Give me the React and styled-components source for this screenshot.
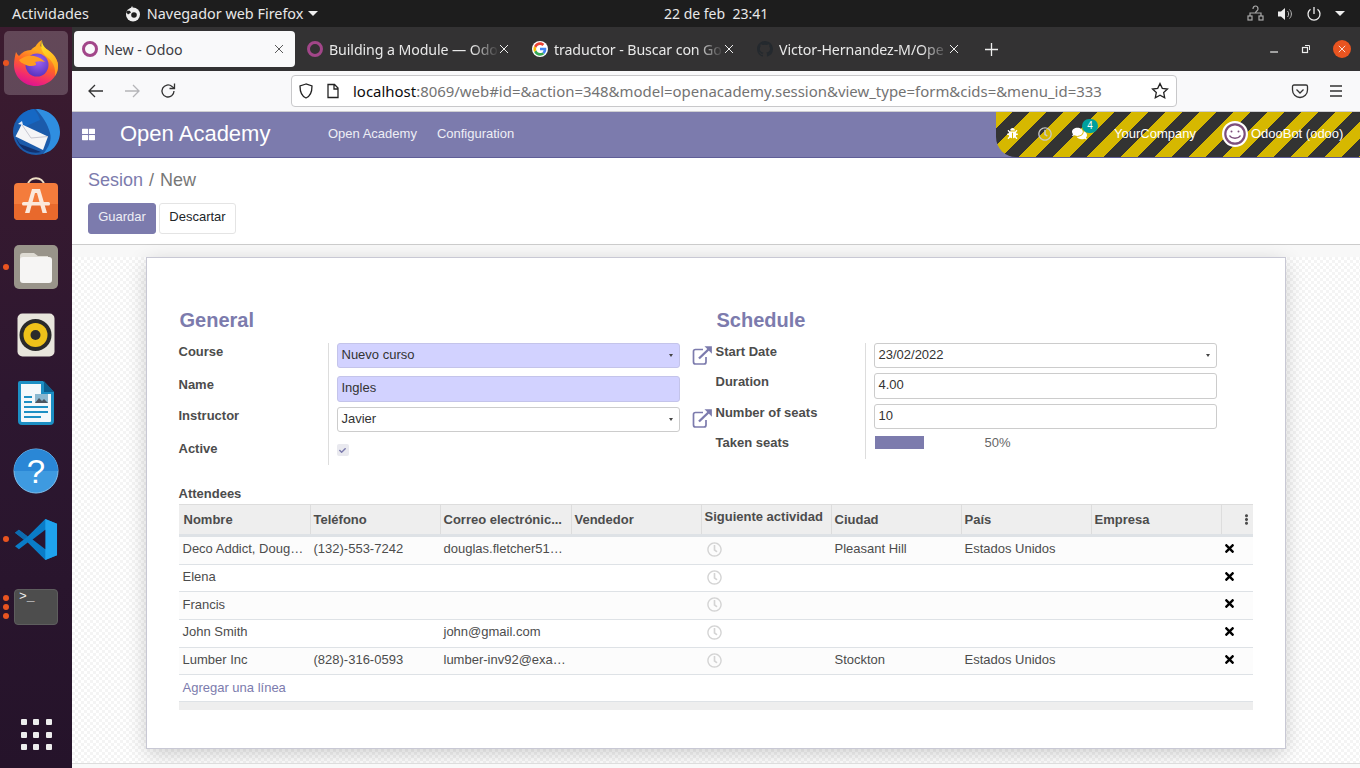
import React from 'react';
import styled, { createGlobalStyle } from 'styled-components';
import {
  FaBug,
  FaCheck,
  FaComments,
  FaEllipsisV,
  FaRegClock,
  FaThLarge,
  FaTimes,
} from 'react-icons/fa';

const ARIAL = '"Liberation Sans", Arial, sans-serif';
const UBUNTU = '"Noto Sans", "Open Sans", sans-serif';
const PURPLE = '#7c7bad';
const COLUMNS = '131px 130px 131px 130px 130px 130px 130px 130px 32px';

const GlobalStyle = createGlobalStyle`
  html, body { margin: 0; padding: 0; height: 100%; overflow: hidden; }
  * { box-sizing: border-box; }
`;

const Screen = styled.div`
  width: 1360px;
  height: 768px;
  display: flex;
  flex-direction: column;
  overflow: hidden;
  font-family: ${ARIAL};
`;

/* ---- gnome top bar ---- */
const TopBar = styled.div`
  height: 27px;
  flex: none;
  background: #1d1d1d;
  color: #e8e8e8;
  font-family: ${UBUNTU};
  font-size: 14.4px;
  display: grid;
  grid-template-columns: 652px auto 1fr;
  align-items: center;
  padding: 0 15px 0 12px;
`;
const TopLeft = styled.div`
  display: flex;
  align-items: center;
`;
const AppMenu = styled.div`
  display: flex;
  align-items: center;
  gap: 5px;
  margin-left: 36px;
  svg {
    margin-right: 1px;
  }
`;
const TopClock = styled.div`
  font-size: 14px;
  white-space: pre;
`;
const TopRight = styled.div`
  display: flex;
  align-items: center;
  justify-content: flex-end;
  gap: 13px;
`;
const Caret = styled.span`
  width: 0;
  height: 0;
  border-left: 5px solid transparent;
  border-right: 5px solid transparent;
  border-top: 5px solid #eee;
`;

const Body = styled.div`
  flex: 1;
  display: flex;
  min-height: 0;
`;

/* ---- dock ---- */
const Dock = styled.div`
  width: 72px;
  flex: none;
  background: linear-gradient(180deg, #3c1b2f 0%, #2d1730 50%, #25132a 100%);
  display: flex;
  flex-direction: column;
  align-items: center;
  padding: 4px 0 0;
  gap: 4px;
`;
const DockItem = styled.div`
  position: relative;
  width: 64px;
  height: 64px;
  flex: none;
  border-radius: 5px;
  display: flex;
  align-items: center;
  justify-content: center;
  background: ${p => (p.$active ? 'rgba(255,255,255,0.2)' : 'transparent')};
`;
const DockDots = styled.div`
  position: absolute;
  left: -1px;
  top: 0;
  bottom: 0;
  display: flex;
  flex-direction: column;
  justify-content: center;
  gap: 3px;
`;
const DockDot = styled.span`
  width: 6px;
  height: 6px;
  border-radius: 50%;
  background: #e95420;
`;
const AppGrid = styled.div`
  margin-top: auto;
  margin-bottom: 18px;
  display: grid;
  grid-template-columns: repeat(3, 6px);
  gap: 6.5px;
`;
const AppGridDot = styled.span`
  width: 6px;
  height: 6px;
  border-radius: 1px;
  background: #eee;
`;

/* ---- firefox window ---- */
const Browser = styled.div`
  flex: 1;
  min-width: 0;
  display: flex;
  flex-direction: column;
`;
const TabBar = styled.div`
  height: 44px;
  flex: none;
  background: #333233;
  display: flex;
  align-items: center;
  padding: 0 0 0 2px;
  font-family: ${UBUNTU};
  font-size: 14.2px;
`;
const Tab = styled.div`
  width: ${p => (p.$active ? '221px' : '225px')};
  margin-right: ${p => (p.$active ? '4px' : '0')};
  height: 36px;
  border-radius: 4px;
  background: ${p => (p.$active ? '#f9f9fa' : 'transparent')};
  color: ${p => (p.$active ? '#3d3d44' : '#e8e8e8')};
  display: flex;
  align-items: center;
  padding: 0 ${p => (p.$active ? '11px' : '15px')} 0 8px;
  gap: 6px;
`;
const TabTitle = styled.span`
  flex: 1;
  min-width: 0;
  white-space: nowrap;
  overflow: hidden;
  margin-right: ${p => (p.$active ? '0' : '-6px')};
  letter-spacing: ${p => (p.$active ? '0' : '-0.1px')};
  -webkit-mask-image: ${p =>
    p.$active ? 'none' : 'linear-gradient(90deg, #000 84%, transparent 100%)'};
`;
const OdooFavicon = styled.span`
  width: 16px;
  height: 16px;
  flex: none;
  border-radius: 50%;
  border: 3.5px solid #a24689;
`;
const NewTab = styled.div`
  margin-left: 11px;
  display: flex;
  align-items: center;
`;
const WindowButtons = styled.div`
  margin-left: auto;
  display: flex;
  align-items: center;
  gap: 22px;
  padding-right: 9px;
`;
const CloseCircle = styled.span`
  width: 18px;
  height: 18px;
  border-radius: 50%;
  background: #e95420;
  display: flex;
  align-items: center;
  justify-content: center;
`;

const Toolbar = styled.div`
  height: 41px;
  flex: none;
  background: #f9f9fa;
  border-bottom: 1px solid #cfcfd2;
  display: flex;
  align-items: center;
  padding: 0 15px 0 15px;
`;
const NavButtons = styled.div`
  display: flex;
  align-items: center;
  gap: 18px;
  width: 204px;
`;
const UrlBar = styled.div`
  width: 886px;
  height: 32px;
  background: #fff;
  border: 1px solid #c8c8ca;
  border-radius: 4px;
  display: flex;
  align-items: center;
  padding: 0 7px 0 6px;
  gap: 12px;
  font-family: ${UBUNTU};
  font-size: 14.95px;
  color: #737373;
`;
const UrlText = styled.div`
  flex: 1;
  white-space: nowrap;
  overflow: hidden;
  margin-left: 1px;
  b {
    font-weight: 400;
    color: #0c0c0d;
  }
`;
const ToolbarRight = styled.div`
  margin-left: auto;
  display: flex;
  align-items: center;
  gap: 18px;
`;

/* ---- odoo ---- */
const OdooNav = styled.div`
  height: 46px;
  flex: none;
  background: ${PURPLE};
  border-bottom: 1px solid #5f5e97;
  color: #fff;
  display: flex;
  align-items: stretch;
`;
const AppsToggle = styled.div`
  width: 48px;
  padding-left: 10px;
  display: flex;
  align-items: center;
  font-size: 13px;
`;
const Brand = styled.div`
  font-size: 22px;
  line-height: 44px;
  width: 208px;
`;
const NavMenu = styled.div`
  display: flex;
  align-items: center;
  gap: 20px;
  font-size: 13px;
  padding-bottom: 2px;
  color: #eeeef5;
`;
const SystrayHatch = styled.div`
  margin-left: auto;
  width: 364px;
  border-bottom-left-radius: 20px;
  background: repeating-linear-gradient(
    135deg,
    #d6b800 0,
    #d6b800 12px,
    #333 12px,
    #333 24px
  );
  display: flex;
  align-items: center;
  font-size: 13px;
  padding: 0 0 2px 11px;
  color: #fff;
`;
const TrayIcon = styled.span`
  position: relative;
  display: flex;
  align-items: center;
  margin-right: ${p => p.$gap}px;
  color: ${p => p.$color || '#fff'};
`;
const Badge = styled.span`
  position: absolute;
  left: 10px;
  top: -7px;
  width: 16px;
  height: 14px;
  border-radius: 8px;
  background: #00a09d;
  color: #fff;
  font-size: 10px;
  text-align: center;
  line-height: 13px;
`;
const Avatar = styled.span`
  width: 26px;
  height: 26px;
  border-radius: 50%;
  background: #fff;
  border: 2px solid #fff;
  margin: 0 3px 0 26px;
  display: flex;
`;

const ControlPanel = styled.div`
  height: 87px;
  flex: none;
  background: #fff;
  border-bottom: 1px solid #ccc;
  padding: 10px 16px 0;
`;
const Breadcrumb = styled.div`
  font-size: 18px;
  line-height: 24px;
  color: #777;
  a {
    color: ${PURPLE};
  }
  i {
    font-style: normal;
    margin: 0 6px;
  }
`;
const Buttons = styled.div`
  display: flex;
  gap: 3px;
  margin-top: 11px;
`;
const Button = styled.button`
  width: ${p => (p.$primary ? '68px' : '77px')};
  height: 31px;
  font-family: ${ARIAL};
  font-size: 13px;
  padding: 0 0 5px;
  border-radius: 3px;
  border: 1px solid ${p => (p.$primary ? PURPLE : '#e4e4e4')};
  background: ${p => (p.$primary ? PURPLE : '#fff')};
  color: ${p => (p.$primary ? '#eeeef5' : '#212529')};
`;

const Content = styled.div`
  flex: 1;
  min-height: 0;
  display: flex;
  flex-direction: column;
  align-items: center;
  padding-top: 12px;
  background:
    linear-gradient(#f8f8f8, #f8f8f8) 0 0 / 100% 12px no-repeat,
    repeating-conic-gradient(#f4f4f4 0 25%, #fff 0 50%) 0 0 / 6px 6px;
`;
const Sheet = styled.div`
  width: 1140px;
  height: 492px;
  flex: none;
  margin-right: 1px;
  background: #fff;
  border: 1px solid #c8c8d4;
  box-shadow: 0 5px 20px -1px rgba(0, 0, 0, 0.2);
  padding: 47px 32px 0;
`;
const Footer = styled.div`
  margin-top: auto;
  width: 100%;
  height: 5px;
  flex: none;
  background: #f9f9f9;
  border-top: 1px solid #ddd;
`;

const Groups = styled.div`
  display: grid;
  grid-template-columns: 537px 1fr;
`;
const GroupTitle = styled.div`
  font-size: 20px;
  font-weight: 700;
  line-height: 24px;
  color: ${PURPLE};
  margin: 3px 0 11px 1px;
`;
const Fields = styled.div`
  display: grid;
  grid-template-columns: 149px 1fr;
`;
const FieldLabel = styled.label`
  height: ${p => p.$height}px;
  padding-top: 1px;
  font-size: 13px;
  font-weight: 700;
  line-height: 16px;
  color: #4c4c4c;
`;
const FieldValue = styled.div`
  height: ${p => p.$height}px;
  border-left: 1px solid #ddd;
  padding-left: 8px;
  position: relative;
`;
const Input = styled.div`
  width: 343px;
  height: ${p => p.$height || 25}px;
  border: 1px solid ${p => (p.$required ? '#c4c4ea' : '#ccc')};
  border-radius: 3px;
  background: ${p => (p.$required ? '#d2d2ff' : '#fff')};
  font-size: 13px;
  line-height: 21px;
  padding: 0 4px;
  color: #333;
  position: relative;
`;
const SelectCaret = styled.span`
  position: absolute;
  right: 6px;
  top: 10px;
  border-left: 2.5px solid transparent;
  border-right: 2.5px solid transparent;
  border-top: 3px solid #444;
`;
const ExternalLink = styled.span`
  position: absolute;
  left: 363px;
  top: ${p => p.$top}px;
  display: flex;
`;
const Checkbox = styled.span`
  margin-top: 4px;
  width: 12px;
  height: 12px;
  border-radius: 2px;
  background: #e9e9ef;
  color: ${PURPLE};
  font-size: 7px;
  display: flex;
  align-items: center;
  justify-content: center;
`;
const Progress = styled.div`
  display: flex;
  align-items: center;
  font-size: 13px;
  color: #666;
  padding: 1px 0 0 1px;
`;
const ProgressTrack = styled.div`
  width: 99px;
  height: 13px;
  margin-right: 11px;
`;
const ProgressFill = styled.div`
  height: 100%;
  background: ${PURPLE};
`;

const AttendeesLabel = styled.div`
  font-size: 13px;
  font-weight: 700;
  color: #4c4c4c;
  line-height: 16px;
  margin-top: 21px;
  margin-bottom: 2px;
`;
const Table = styled.div`
  width: 1074px;
  font-size: 13px;
  color: #4c4c4c;
`;
const HeadRow = styled.div`
  display: grid;
  grid-template-columns: ${COLUMNS};
  height: 33px;
  background: #eee;
  border-top: 1px solid #ddd;
  border-bottom: 3px solid #dee2e6;
`;
const HeadCell = styled.div`
  font-weight: 700;
  line-height: 16px;
  padding: ${p => (p.$high ? '4px' : '7px')} 0 0 ${p => (p.$first ? '5px' : '3px')};
  border-left: ${p => (p.$first ? '0' : '1px solid #ddd')};
  white-space: nowrap;
  overflow: hidden;
`;
const Row = styled.div`
  display: grid;
  grid-template-columns: ${COLUMNS};
  height: 27.7px;
  background: ${p => (p.$odd ? '#fcfcfc' : '#fff')};
  border-bottom: 1px solid #dee2e6;
`;
const Cell = styled.div`
  line-height: 16px;
  padding: 4.3px 4px 0;
  white-space: nowrap;
  min-width: 0;
`;
const ActivityCell = styled.div`
  padding: 5px 0 0 6px;
  color: #d4d4d4;
  font-size: 15px;
  display: flex;
  align-items: flex-start;
`;
const DeleteCell = styled.div`
  padding: 5px 0 0 2px;
  color: #000;
  font-size: 13px;
  display: flex;
  align-items: flex-start;
`;
const AddLine = styled.div`
  height: 27px;
  border-bottom: 1px solid #dee2e6;
  color: ${PURPLE};
  line-height: 16px;
  padding: 5px 4px 0;
`;
const TableFoot = styled.div`
  height: 8px;
  background: #eee;
`;

/* ---- small drawings ---- */
const OpenIcon = () => (
  <svg width="21" height="20" viewBox="0 0 21 20" fill="none" stroke={PURPLE} strokeWidth="1.7">
    <path d="M11 4.500H3.500a2 2 0 0 0-2 2V17a2 2 0 0 0 2 2H12a2 2 0 0 0 2-2v-5" />
    <path d="M7 13.500 18.500 2.500" strokeWidth="2.400" />
    <path d="M12.500 1.300h7.400v7.400z" fill={PURPLE} stroke="none" />
  </svg>
);

const FirefoxLogo = () => (
  <svg width="46" height="48" viewBox="0 0 46 48">
    <defs>
      <linearGradient id="ffBody" x1="0.75" y1="0.1" x2="0.4" y2="1">
        <stop offset="0" stopColor="#ffb81f" />
        <stop offset="0.45" stopColor="#ff6228" />
        <stop offset="0.78" stopColor="#f22c6e" />
        <stop offset="1" stopColor="#dc1490" />
      </linearGradient>
      <linearGradient id="ffFlame" x1="0.4" y1="0" x2="0.6" y2="1">
        <stop offset="0" stopColor="#ffe226" />
        <stop offset="1" stopColor="#ff9a1e" />
      </linearGradient>
      <radialGradient id="ffCore" cx="0.55" cy="0.35" r="0.75">
        <stop offset="0" stopColor="#9f63f3" />
        <stop offset="1" stopColor="#4f2db8" />
      </radialGradient>
    </defs>
    <path d="M3 13c1 2 2 3 3 4 3-4 7-6 12-6 3-4 8-5 11-3 8 3 16 10 16 19 0 11-10 20-22 20S1 38 1 26c0-5 1-9 2-13z" fill="url(#ffBody)" />
    <path d="M29 1c0 5 3 8 7 11 6 5 9 10 9 15 0 4-1 7-3 10 1-8-2-15-8-19-5-4-7-10-5-17z" fill="url(#ffFlame)" />
    <path d="M29 1c-2 4-2 8 0 12l-8-2c1-4 4-8 8-10z" fill="#ffa81f" />
    <circle cx="24" cy="26" r="11.500" fill="url(#ffCore)" />
    <path d="M6 21c5-4 10-5 15-4 5 1 8 3 11 6-4-1-7-1-10 0 1 1 1 2 1 3-4 2-9 1-12-1-2-1-4-2-5-4z" fill="#ff9c20" />
  </svg>
);

const ThunderbirdLogo = () => (
  <svg width="48" height="48" viewBox="0 0 48 48">
    <circle cx="24" cy="25" r="23" fill="#1b5bab" />
    <path d="M24 2c12 0 24 9 24 23 0 8-4 15-10 19l-7 3c6-7 9-14 7-21-2-9-8-17-14-24z" fill="#2f8ee0" />
    <path d="M5 14C8 7 14 3 22 2c3 4 5 7 6 11L12 20z" fill="#1668c4" />
    <path d="M3.500 29.500 9.700 17.300 36 29.500 31 43z" fill="#f5f5f7" />
    <path d="M9.700 17.300 19 31l17-1.500" fill="none" stroke="#c8c8d2" strokeWidth="1" />
    <path d="M4 31c2 6 6 11 11 13 5 2 10 2 14 1L8 37z" fill="#12306d" />
    <path d="M6 17l4-3 1 4z" fill="#e8eef8" />
  </svg>
);

const SoftwareLogo = () => (
  <svg width="46" height="44" viewBox="0 0 46 44">
    <path d="M15 8c0-9 16-9 16 0" fill="none" stroke="#eedfc5" strokeWidth="1.800" />
    <rect x="1" y="6" width="44" height="37" rx="4" fill="#f47c3c" />
    <path d="M1 27h44v12a4 4 0 0 1-4 4H5a4 4 0 0 1-4-4z" fill="#e8692c" />
    <path d="M19 12h8l7 24h-4.500l-5.500-20h-2l-5.500 20H12z" fill="#fbe9dc" />
    <rect x="9" y="25" width="28" height="3.500" rx="1.500" fill="#fbe9dc" />
  </svg>
);

const FilesLogo = () => (
  <svg width="46" height="46" viewBox="0 0 46 46">
    <rect x="1" y="1" width="44" height="44" rx="5" fill="#99948a" />
    <path d="M7 12a3 3 0 0 1 3-3h11l4 3h10v4H7z" fill="#dedbd3" />
    <rect x="7" y="13" width="32" height="26" rx="3" fill="#f6f5f4" />
  </svg>
);

const RhythmboxLogo = () => (
  <svg width="38" height="44" viewBox="0 0 38 44">
    <rect x="0.500" y="0.500" width="37" height="43" rx="5" fill="#e8e5dc" />
    <circle cx="18.500" cy="22" r="16" fill="#2a2a2a" />
    <circle cx="18.500" cy="22" r="12" fill="#eec21a" />
    <circle cx="18.500" cy="22" r="5" fill="#2b2b2b" />
  </svg>
);

const WriterLogo = () => (
  <svg width="38" height="46" viewBox="0 0 38 46">
    <path d="M3 1h23l11 11v29a4 4 0 0 1-4 4H5a4 4 0 0 1-4-4V3a2 2 0 0 1 2-2z" fill="#1c8fc4" />
    <path d="M4 4h20v10h10v27a1 1 0 0 1-1 1H5a1 1 0 0 1-1-1z" fill="#f3f8fb" />
    <path d="M27 1l10 11H27z" fill="#0e5f8f" />
    <path d="M7 16h8v2H7zM7 21h8v2H7zM7 26h24v2H7zM7 31h24v2H7zM7 36h17v2H7z" fill="#1c8fc4" />
    <rect x="18" y="14" width="13" height="9" fill="#8bb8d0" />
    <path d="M18 23l4-5 3 3 2-2 4 4z" fill="#4b5560" />
  </svg>
);

const HelpLogo = () => (
  <svg width="46" height="46" viewBox="0 0 46 46">
    <circle cx="23" cy="23" r="22" fill="#3e9ae0" stroke="#7fc0ee" strokeWidth="1" />
    <path d="M1 23a22 22 0 0 1 44 0z" fill="#2a87d6" />
    <text x="23" y="35" textAnchor="middle" fontFamily={ARIAL} fontSize="33" fill="#fff">?</text>
  </svg>
);

const VsCodeLogo = () => (
  <svg width="43" height="43" viewBox="0 0 44 44">
    <path d="M31 1 13 19 4 12 0 15l9 7-9 7 4 3 9-7 18 18 12-5V6z" fill="#0a7cc8" />
    <path d="M31 1l12 5v32l-12 5z" fill="#1fa3ee" />
    <path d="M31 12v20L18 22z" fill="#2a1530" />
    <path d="M13 19 4 12 0 15l9 7z" fill="#0d6bb0" />
  </svg>
);

const Terminal = styled.div`
  width: 44px;
  height: 36px;
  border-radius: 4px;
  background: #4d4d4d;
  border: 1px solid #5e5e5e;
  color: #eee;
  font-family: "Liberation Mono", monospace;
  font-size: 13px;
  line-height: 12px;
  padding: 1px 4px;
`;

const Smile = () => (
  <svg width="22" height="22" viewBox="0 0 22 22">
    <circle cx="11" cy="11" r="9.700" fill="#fff" stroke="#7c4f7c" strokeWidth="2.200" />
    <circle cx="7.500" cy="8.500" r="1" fill="#7c4f7c" />
    <circle cx="14.500" cy="8.500" r="1" fill="#7c4f7c" />
    <path d="M5.500 12.500c2 3.500 9 3.500 11 0" fill="none" stroke="#7c4f7c" strokeWidth="1.500" />
  </svg>
);

const GoogleIcon = () => (
  <svg width="16" height="16" viewBox="0 0 48 48" style={{ flex: 'none' }}>
    <circle cx="24" cy="24" r="24" fill="#fff" />
    <path d="M43 24.500c0-1.400-.1-2.700-.4-4H24v7.600h10.800c-.5 2.500-1.900 4.600-4 6l6.200 4.800c3.600-3.300 6-8.300 6-14.400z" fill="#4285f4" />
    <path d="M24 44c5.400 0 9.900-1.800 13-4.900l-6.200-4.800c-1.700 1.200-4 1.900-6.800 1.900-5.200 0-9.600-3.500-11.200-8.200l-6.400 5C9.700 39.500 16.300 44 24 44z" fill="#34a853" />
    <path d="M12.800 28c-.8-2.500-.8-5.500 0-8l-6.400-5c-2.800 5.500-2.800 12.500 0 18z" fill="#fbbc05" />
    <path d="M24 11.800c2.900 0 5.400 1 7.400 2.900l5.500-5.500C33.600 6 29.200 4 24 4 16.300 4 9.700 8.500 6.400 15l6.400 5c1.600-4.700 6-8.200 11.200-8.200z" fill="#ea4335" />
  </svg>
);

const GithubIcon = () => (
  <svg width="16" height="16" viewBox="0 0 16 16" fill="#24292e" style={{ flex: 'none' }}>
    <path d="M8 0C3.600 0 0 3.600 0 8c0 3.500 2.300 6.500 5.500 7.600.4.100.5-.2.500-.4v-1.400c-2.200.5-2.700-1-2.700-1-.4-.9-.9-1.200-.9-1.200-.7-.5.100-.5.100-.5.800.1 1.200.8 1.200.8.700 1.200 1.900.9 2.300.7.100-.5.300-.9.500-1.100-1.800-.2-3.700-.9-3.700-4 0-.9.300-1.600.8-2.100-.1-.2-.4-1 .1-2.100 0 0 .7-.2 2.200.8a7.500 7.500 0 0 1 4 0c1.500-1 2.200-.8 2.200-.8.400 1.100.200 1.900.100 2.100.5.600.8 1.300.8 2.100 0 3.100-1.900 3.700-3.700 3.900.3.300.6.800.6 1.500v2.200c0 .2.100.5.600.4A8 8 0 0 0 16 8c0-4.400-3.600-8-8-8z" />
  </svg>
);

const CloseX = ({ color = '#5a5a5a', size = 10 }) => (
  <svg width={size} height={size} viewBox="0 0 10 10" stroke={color} strokeWidth="1" style={{ flex: 'none' }}>
    <path d="M1 1l8 8M9 1 1 9" />
  </svg>
);

const FirefoxGlyph = () => (
  <svg width="16" height="16" viewBox="0 0 16 16">
    <circle cx="8" cy="8.500" r="7" fill="#eee" />
    <circle cx="9" cy="9" r="2.800" fill="#1d1d1d" />
    <path d="M7 0c1 1 .5 2.500 1 3 3-.5 5 1 5.500 3L9 6 5 4z" fill="#eee" />
    <path d="M1 6c1-1 3-1.500 4-1l1 1.500-3 2z" fill="#1d1d1d" />
  </svg>
);

const people = [
  { name: 'Deco Addict, Doug…', phone: '(132)-553-7242', mail: 'douglas.fletcher51…', city: 'Pleasant Hill', country: 'Estados Unidos' },
  { name: 'Elena' },
  { name: 'Francis' },
  { name: 'John Smith', mail: 'john@gmail.com' },
  { name: 'Lumber Inc', phone: '(828)-316-0593', mail: 'lumber-inv92@exa…', city: 'Stockton', country: 'Estados Unidos' },
];

const headers = ['Nombre', 'Teléfono', 'Correo electrónic...', 'Vendedor', 'Siguiente actividad', 'Ciudad', 'País', 'Empresa'];

const dockApps = [
  { logo: <FirefoxLogo />, dots: 1, active: true },
  { logo: <ThunderbirdLogo /> },
  { logo: <SoftwareLogo /> },
  { logo: <FilesLogo />, dots: 1 },
  { logo: <RhythmboxLogo /> },
  { logo: <WriterLogo /> },
  { logo: <HelpLogo /> },
  { logo: <VsCodeLogo />, dots: 1 },
  { logo: <Terminal>{'>_'}</Terminal>, dots: 3 },
];

const App = () => (
  <Screen>
    <GlobalStyle />
    <TopBar>
      <TopLeft>
        Actividades
        <AppMenu>
          <FirefoxGlyph />
          Navegador web Firefox
          <Caret />
        </AppMenu>
      </TopLeft>
      <TopClock>22 de feb  23:41</TopClock>
      <TopRight>
        <svg width="17" height="17" viewBox="0 0 17 17" fill="none" stroke="#aaa" strokeWidth="1.200">
          <rect x="1" y="11" width="4" height="4" />
          <rect x="12" y="11" width="4" height="4" />
          <path d="M3 11V8h11v3M6 4c0-4 5-4 5 0 0 2-2.500 2-2.500 4" />
        </svg>
        <svg width="16" height="16" viewBox="0 0 16 16" fill="#eee">
          <path d="M1 5.500h3L8 2v12L4 10.500H1z" />
          <path d="M10.500 5c1.500 1.500 1.500 4.500 0 6M12.500 3.500c2.500 2.500 2.500 6.500 0 9" fill="none" stroke="#bbb" />
        </svg>
        <svg width="16" height="16" viewBox="0 0 16 16" fill="none" stroke="#eee" strokeWidth="1.300">
          <path d="M8 1v7M4.500 3.200a6 6 0 1 0 7 0" />
        </svg>
        <Caret />
      </TopRight>
    </TopBar>
    <Body>
      <Dock>
        {dockApps.map((app, i) => (
          <DockItem key={i} $active={app.active}>
            {app.dots && (
              <DockDots>
                {Array.from({ length: app.dots }, (_, d) => <DockDot key={d} />)}
              </DockDots>
            )}
            {app.logo}
          </DockItem>
        ))}
        <AppGrid>
          {Array.from({ length: 9 }, (_, i) => <AppGridDot key={i} />)}
        </AppGrid>
      </Dock>
      <Browser>
        <TabBar>
          <Tab $active>
            <OdooFavicon />
            <TabTitle $active>New - Odoo</TabTitle>
            <CloseX />
          </Tab>
          <Tab>
            <OdooFavicon />
            <TabTitle>Building a Module — Odo</TabTitle>
            <CloseX color="#eee" />
          </Tab>
          <Tab>
            <GoogleIcon />
            <TabTitle>traductor - Buscar con Go</TabTitle>
            <CloseX color="#eee" />
          </Tab>
          <Tab>
            <GithubIcon />
            <TabTitle>Victor-Hernandez-M/Ope</TabTitle>
            <CloseX color="#eee" />
          </Tab>
          <NewTab>
            <svg width="13" height="13" viewBox="0 0 13 13" stroke="#eee" strokeWidth="1.300">
              <path d="M6.500 0v13M0 6.500h13" />
            </svg>
          </NewTab>
          <WindowButtons>
            <svg width="10" height="10" viewBox="0 0 10 10" stroke="#eee" strokeWidth="1.200">
              <path d="M1 8h8" />
            </svg>
            <svg width="10" height="10" viewBox="0 0 10 10" fill="none" stroke="#eee">
              <rect x="1.500" y="3.500" width="5" height="5" strokeWidth="1.200" />
              <path d="M4 1.500h4.500V6" />
            </svg>
            <CloseCircle>
              <CloseX color="#fff" size={8} />
            </CloseCircle>
          </WindowButtons>
        </TabBar>
        <Toolbar>
          <NavButtons>
            <svg width="18" height="18" viewBox="0 0 18 18" fill="none" stroke="#333" strokeWidth="1.300">
              <path d="M16 9H2M8 3 2 9l6 6" />
            </svg>
            <svg width="18" height="18" viewBox="0 0 18 18" fill="none" stroke="#b5b5b8" strokeWidth="1.300">
              <path d="M2 9h14M10 3l6 6-6 6" />
            </svg>
            <svg width="18" height="18" viewBox="0 0 18 18" fill="none" stroke="#333" strokeWidth="1.300">
              <path d="M15 9a6 6 0 1 1-2-4.500L15 6" />
              <path d="M15.500 1.500V6.500H10.500" />
            </svg>
          </NavButtons>
          <UrlBar>
            <svg width="16" height="16" viewBox="0 0 16 16" fill="none" stroke="#222" strokeWidth="1.300" style={{ flex: 'none' }}>
              <path d="M8 1 2 3c0 6 1 10 6 12 5-2 6-6 6-12z" />
            </svg>
            <svg width="14" height="16" viewBox="0 0 14 16" fill="none" stroke="#222" strokeWidth="1.300" style={{ flex: 'none' }}>
              <path d="M2 1.500h6.500L12 5v9.500H2zM8 1.500V6h4" />
            </svg>
            <UrlText>
              <b>localhost</b>:8069/web#id=&action=348&model=openacademy.session&view_type=form&cids=&menu_id=333
            </UrlText>
            <svg width="18" height="18" viewBox="0 0 18 18" fill="none" stroke="#222" strokeWidth="1.300" style={{ flex: 'none' }}>
              <path d="M9 1.500l2.300 4.800 5.200.7-3.800 3.600 1 5.200L9 13.300l-4.700 2.500 1-5.200L1.500 7l5.200-.7z" />
            </svg>
          </UrlBar>
          <ToolbarRight>
            <svg width="18" height="18" viewBox="0 0 18 18" fill="none" stroke="#333" strokeWidth="1.300">
              <path d="M3 3h12a1.500 1.500 0 0 1 1.500 1.500V8A7.500 7.500 0 0 1 1.500 8V4.500A1.500 1.500 0 0 1 3 3z" />
              <path d="M5.500 7.500 9 11l3.500-3.500" />
            </svg>
            <svg width="18" height="18" viewBox="0 0 18 18" stroke="#333" strokeWidth="1.300">
              <path d="M3 4h12M3 9h12M3 14h12" />
            </svg>
          </ToolbarRight>
        </Toolbar>
        <OdooNav>
          <AppsToggle><FaThLarge /></AppsToggle>
          <Brand>Open Academy</Brand>
          <NavMenu>
            <span>Open Academy</span>
            <span>Configuration</span>
          </NavMenu>
          <SystrayHatch>
            <TrayIcon $gap={20}><FaBug size={11} /></TrayIcon>
            <TrayIcon $gap={20} $color="#c9c9c9"><FaRegClock size={14} /></TrayIcon>
            <TrayIcon $gap={27}>
              <FaComments size={15} />
              <Badge>4</Badge>
            </TrayIcon>
            <span>YourCompany</span>
            <Avatar><Smile /></Avatar>
            <span>OdooBot (odoo)</span>
          </SystrayHatch>
        </OdooNav>
        <ControlPanel>
          <Breadcrumb>
            <a>Sesion</a><i>/</i>New
          </Breadcrumb>
          <Buttons>
            <Button $primary>Guardar</Button>
            <Button>Descartar</Button>
          </Buttons>
        </ControlPanel>
        <Content>
          <Sheet>
            <Groups>
              <div>
                <GroupTitle>General</GroupTitle>
                <Fields>
                  <FieldLabel $height={33}>Course</FieldLabel>
                  <FieldValue $height={33}>
                    <Input $required>Nuevo curso<SelectCaret /></Input>
                    <ExternalLink $top={2}><OpenIcon /></ExternalLink>
                  </FieldValue>
                  <FieldLabel $height={31}>Name</FieldLabel>
                  <FieldValue $height={31}>
                    <Input $required $height={26}>Ingles</Input>
                  </FieldValue>
                  <FieldLabel $height={33}>Instructor</FieldLabel>
                  <FieldValue $height={33}>
                    <Input>Javier<SelectCaret /></Input>
                    <ExternalLink $top={1}><OpenIcon /></ExternalLink>
                  </FieldValue>
                  <FieldLabel $height={25}>Active</FieldLabel>
                  <FieldValue $height={25}>
                    <Checkbox><FaCheck /></Checkbox>
                  </FieldValue>
                </Fields>
              </div>
              <div>
                <GroupTitle>Schedule</GroupTitle>
                <Fields>
                  <FieldLabel $height={30}>Start Date</FieldLabel>
                  <FieldValue $height={30}>
                    <Input>23/02/2022<SelectCaret /></Input>
                  </FieldValue>
                  <FieldLabel $height={31}>Duration</FieldLabel>
                  <FieldValue $height={31}>
                    <Input $height={26}>4.00</Input>
                  </FieldValue>
                  <FieldLabel $height={30}>Number of seats</FieldLabel>
                  <FieldValue $height={30}>
                    <Input>10</Input>
                  </FieldValue>
                  <FieldLabel $height={25}>Taken seats</FieldLabel>
                  <FieldValue $height={25}>
                    <Progress>
                      <ProgressTrack>
                        <ProgressFill style={{ width: '50%' }} />
                      </ProgressTrack>
                      50%
                    </Progress>
                  </FieldValue>
                </Fields>
              </div>
            </Groups>
            <AttendeesLabel>Attendees</AttendeesLabel>
            <Table>
              <HeadRow>
                {headers.map((h, i) => (
                  <HeadCell key={h} $first={i === 0} $high={h === 'Siguiente actividad'}>{h}</HeadCell>
                ))}
                <HeadCell><FaEllipsisV size={11} style={{ marginLeft: 16, marginTop: 2 }} /></HeadCell>
              </HeadRow>
              {people.map((p, i) => (
                <Row key={p.name} $odd={i % 2 === 0}>
                  <Cell>{p.name}</Cell>
                  <Cell>{p.phone}</Cell>
                  <Cell>{p.mail}</Cell>
                  <Cell />
                  <ActivityCell><FaRegClock /></ActivityCell>
                  <Cell>{p.city}</Cell>
                  <Cell>{p.country}</Cell>
                  <Cell />
                  <DeleteCell><FaTimes /></DeleteCell>
                </Row>
              ))}
              <AddLine>Agregar una línea</AddLine>
              <TableFoot />
            </Table>
          </Sheet>
          <Footer />
        </Content>
      </Browser>
    </Body>
  </Screen>
);

export default App;
